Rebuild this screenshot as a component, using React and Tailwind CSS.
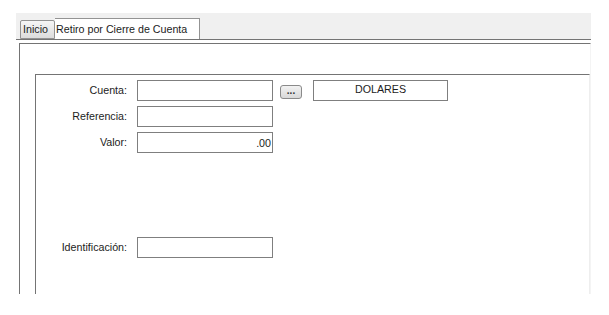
export default function App() {
  const input = "w-[136px] h-[21px] border border-[#7f7f7f] bg-white";
  const label = "w-[91px] text-right mr-[10px]";
  return (
    <div className="w-[609px] h-[315px] bg-white overflow-hidden text-[10.7px] leading-[13px] text-[#1c1c1c] font-['Liberation_Sans',Arial,sans-serif]">
      <div className="ml-[16px] pt-[13px] w-[575px]">
        {/* tab bar */}
        <div className="h-[27px] bg-[#f0f0f0] border-b border-[#747474] flex items-end pl-[4px]">
          <div className="h-[19px] w-[35px] border border-[#939393] rounded-t-[2px] bg-gradient-to-b from-[#f6f6f6] to-[#dcdcdc] flex items-end pl-[2px] pb-[2px]">
            Inicio
          </div>
          <div className="h-[21px] w-[145px] border-t border-r border-[#939393] bg-white flex items-end pl-[1px] pb-[3px]">
            Retiro por Cierre de Cuenta
          </div>
        </div>
        <div className="h-[3px]" />
        {/* panel */}
        <div className="ml-[3px] w-[572px] h-[251px] border-t border-l border-[#747474] border-r border-r-[#f4f4f4]">
          <div className="ml-[15px] mt-[30px] w-[555px] h-[220px] border-t border-l border-[#747474] border-r border-r-[#eeeeee] pt-[5px]">
            <div className="flex items-start">
              <div className="flex items-center h-[21px]">
                <div className={label}>Cuenta:</div>
                <div className={input} />
              </div>
              <div className="ml-[7px] mt-[5px] w-[22px] h-[14px] border border-[#8a8a8a] rounded-[3px] bg-gradient-to-b from-[#f2f2f2] to-[#d8d8d8] flex items-center justify-center text-[10px] leading-[10px] font-bold text-[#333] pb-[2px]">
                ...
              </div>
              <div className="ml-[11px] w-[135px] h-[21px] border border-[#7f7f7f] bg-white text-center pt-[2px]">
                DOLARES
              </div>
            </div>
            <div className="flex items-center h-[21px] mt-[5px]">
              <div className={label}>Referencia:</div>
              <div className={input} />
            </div>
            <div className="flex items-center h-[21px] mt-[5px]">
              <div className={label}>Valor:</div>
              <div className={input + " flex items-center justify-end pr-[1px] pt-[1px]"}>.00</div>
            </div>
            <div className="flex items-center h-[21px] mt-[84px]">
              <div className={label}>Identificación:</div>
              <div className={input} />
            </div>
          </div>
        </div>
      </div>
    </div>
  );
}
